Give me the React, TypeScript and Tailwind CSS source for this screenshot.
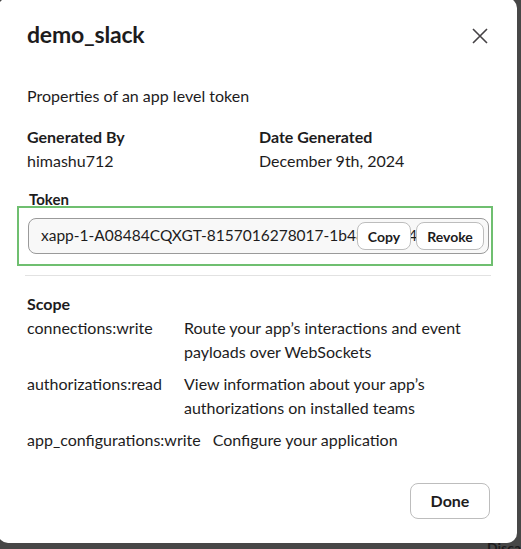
import React from 'react';

const scopes = [
  { name: 'connections:write', desc: 'Route your app’s interactions and event payloads over WebSockets' },
  { name: 'authorizations:read', desc: 'View information about your app’s authorizations on installed teams' },
  { name: 'app_configurations:write', desc: 'Configure your application' },
];

const App: React.FC = () => {
  return (
    <div
      className="w-[521px] h-[549px] overflow-hidden bg-[#474747] text-[#1d1c1d] relative"
      style={{ fontFamily: 'Lato, "Noto Sans", sans-serif' }}
    >
      <div className="ml-[-2px] mt-[-2px] w-[519px] h-[545px] bg-white rounded-[10px] flex flex-col px-[29px]">
        <div className="flex items-center justify-between pt-[22px]">
          <h1 className="text-[23px] font-bold leading-[28px] tracking-[-0.2px]">demo_slack</h1>
          <button className="w-[24px] h-[24px] flex items-center justify-center mr-[-4px] mt-[4px] text-[#454245]">
            <svg width="16" height="16" viewBox="0 0 16 16" fill="none" stroke="currentColor" strokeWidth="1.6">
              <path d="M1 1L15 15M15 1L1 15" />
            </svg>
          </button>
        </div>

        <p className="text-[16px] leading-[22px] mt-[37px]">Properties of an app level token</p>

        <div className="grid grid-cols-[232px_1fr] mt-[18px] text-[16px] leading-[24px]">
          <div>
            <div className="font-bold">Generated By</div>
            <div>himashu712</div>
          </div>
          <div>
            <div className="font-bold">Date Generated</div>
            <div>December 9th, 2024</div>
          </div>
        </div>

        <div className="mt-[16px] mb-[-3px] text-[15px] leading-[20px] font-bold ml-[2px] relative">Token</div>
        <div className="ml-[-10px] mr-[-5px] border-2 border-[#6fbf70] pl-[9px] pr-[2px] pt-[10px] pb-[10px]">
          <div className="relative h-[36px] rounded-[8px] border border-[#9a9a9a] bg-[#f8f8f8] overflow-hidden flex items-center pl-[12px]">
            <span className="text-[15.5px] whitespace-nowrap">xapp-1-A08484CQXGT-8157016278017-1b4823b9a4f0c5d9e8</span>
            <div className="absolute right-[4px] top-[3px] flex gap-[5px]">
              <button className="h-[28px] w-[54px] rounded-[8px] border border-[#bdbdbd] bg-white text-[14px] font-bold">Copy</button>
              <button className="h-[28px] w-[68px] rounded-[8px] border border-[#bdbdbd] bg-white text-[14px] font-bold">Revoke</button>
            </div>
          </div>
        </div>

        <div className="mt-[9px] border-t border-[#e2e2e2] mr-[-3px] ml-[-2px]" />

        <div className="mt-[16px] text-[16px] leading-[24px]">
          <div className="font-bold">Scope</div>
          <div className="flex flex-col gap-[8px]">
            {scopes.map((s) => (
              <div key={s.name} className="flex gap-[12px]">
                <div className="min-w-[145px] shrink-0">{s.name}</div>
                <div className="max-w-[300px]">{s.desc}</div>
              </div>
            ))}
          </div>
        </div>

        <div className="flex-1" />
        <div className="flex justify-end mb-[24px] mr-[-2px]">
          <button className="h-[36px] w-[80px] rounded-[8px] border border-[#bdbdbd] bg-white text-[16px] font-bold">Done</button>
        </div>
      </div>
      <div className="absolute right-[0px] bottom-[-9px] text-[14px] text-[#1d1c1d] font-bold">Disca</div>
    </div>
  );
};

export default App;
